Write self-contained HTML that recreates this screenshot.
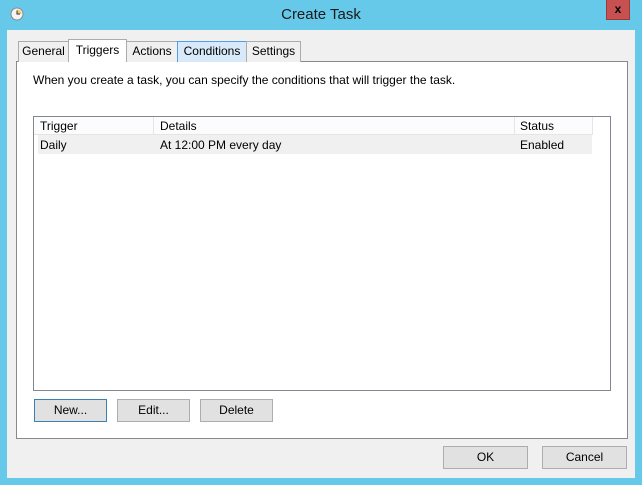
<!DOCTYPE html>
<html><head><style>
*{margin:0;padding:0;box-sizing:border-box}
body{width:642px;height:485px;background:#67c9ea;font-family:"Liberation Sans",sans-serif;font-size:12px;color:#000;position:relative;overflow:hidden}
.a{position:absolute}
.title{left:0;top:6px;width:642px;text-align:center;font-size:15px;color:#1a1a1a}
.close{left:606px;top:0;width:24px;height:20px;background:#c75050;border:1px solid #9c3a3a;border-top:none;color:#000;font-weight:bold;text-align:center;font-size:12px;line-height:18px}
.client{left:7px;top:30px;width:628px;height:448px;background:#f0f0f0}
.tab{top:41px;height:21px;border:1px solid #acacac;border-bottom:none;background:#f0f0f0;text-align:center;line-height:19px;color:#000}
.panel{left:16px;top:61px;width:612px;height:378px;background:#fff;border:1px solid #898989}
.btn{height:23px;border:1px solid #adadad;background:#e1e1e1;text-align:center;line-height:21px}
</style></head><body>
<svg class="a" style="left:10px;top:7px" width="14" height="14" viewBox="0 0 14 14"><circle cx="7" cy="7" r="6" fill="#f4f4f4" stroke="#8a8a8a"/><path d="M7 7V2.5A4.5 4.5 0 0 1 11.5 7Z" fill="#f2c96a"/><path d="M7 3.5V7H10" stroke="#333" fill="none" stroke-width="1"/></svg>
<div class="a title">Create Task</div>
<div class="a close">x</div>
<div class="a client"></div>
<div class="a panel"></div>
<div class="a tab" style="left:18px;width:51px">General</div>
<div class="a tab" style="left:68px;top:39px;height:23px;width:59px;background:#fff;z-index:2;line-height:20px">Triggers</div>
<div class="a tab" style="left:126px;width:52px">Actions</div>
<div class="a tab" style="left:177px;width:70px;background:#d8eaf9;border-color:#569de5">Conditions</div>
<div class="a tab" style="left:246px;width:55px">Settings</div>
<div class="a" style="left:33px;top:73px">When you create a task, you can specify the conditions that will trigger the task.</div>
<div class="a" style="left:33px;top:116px;width:578px;height:275px;border:1px solid #828790;background:#fff"></div>
<div class="a" style="left:34px;top:117px;width:559px;height:18px;background:#fcfcfc;border-bottom:1px solid #e5e5e5"></div>
<div class="a" style="left:153px;top:117px;width:1px;height:18px;background:#e5e5e5"></div>
<div class="a" style="left:514px;top:117px;width:1px;height:18px;background:#e5e5e5"></div>
<div class="a" style="left:592px;top:117px;width:1px;height:18px;background:#e5e5e5"></div>
<div class="a" style="left:40px;top:119px">Trigger</div>
<div class="a" style="left:160px;top:119px">Details</div>
<div class="a" style="left:520px;top:119px">Status</div>
<div class="a" style="left:38px;top:135px;width:554px;height:19px;background:#f0f0f0"></div>
<div class="a" style="left:40px;top:138px">Daily</div>
<div class="a" style="left:160px;top:138px">At 12:00 PM every day</div>
<div class="a" style="left:520px;top:138px">Enabled</div>
<div class="a btn" style="left:34px;top:399px;width:73px;border-color:#3c7fb1">New...</div>
<div class="a btn" style="left:117px;top:399px;width:73px">Edit...</div>
<div class="a btn" style="left:200px;top:399px;width:73px">Delete</div>
<div class="a btn" style="left:443px;top:446px;width:85px">OK</div>
<div class="a btn" style="left:542px;top:446px;width:85px">Cancel</div>
</body></html>
